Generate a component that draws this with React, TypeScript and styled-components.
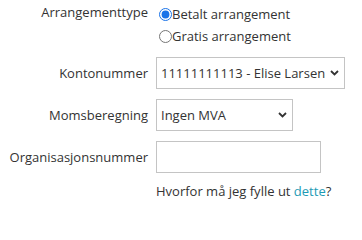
import React from 'react'
import styled, { createGlobalStyle } from 'styled-components'

const GlobalStyle = createGlobalStyle`
  html, body {
    margin: 0;
    padding: 0;
    background: #fff;
    font-family: 'Open Sans', 'Liberation Sans', sans-serif;
    font-size: 13px;
    color: #333;
  }
`

const Form = styled.div`
  display: grid;
  grid-template-columns: 148px 1fr;
  column-gap: 8px;
  row-gap: 10px;
  padding-top: 3px;
  align-items: center;
`

const Label = styled.label<{ $top?: boolean }>`
  text-align: right;
  align-self: ${(p) => (p.$top ? 'start' : 'center')};
  line-height: 18px;
  color: #333;
`

const RadioGroup = styled.div`
  display: flex;
  flex-direction: column;
`

const RadioRow = styled.label`
  display: flex;
  align-items: center;
  height: 22px;
  line-height: 22px;
`

const Radio = styled.input`
  margin: 0 0 0 3px;
  width: 13px;
  height: 13px;
  accent-color: #1a73e8;
`

const SelectWrap = styled.div<{ $width: number }>`
  position: relative;
  width: ${(p) => p.$width}px;
  height: 32px;
`

const Select = styled.select`
  appearance: none;
  width: 100%;
  height: 100%;
  box-sizing: border-box;
  border: 1px solid #c4c4c4;
  border-radius: 0;
  background: #fff;
  padding: 0 14px 0 4px;
  font-family: inherit;
  font-size: 13px;
  color: #333;
  outline: none;
`

const Chevron = styled.svg`
  position: absolute;
  right: 6px;
  top: 13px;
  pointer-events: none;
`

const TextInput = styled.input`
  width: 165px;
  height: 32px;
  box-sizing: border-box;
  border: 1px solid #c4c4c4;
  border-radius: 0;
  padding: 0 4px;
  font-family: inherit;
  font-size: 13px;
  outline: none;
`

const Help = styled.div`
  grid-column: 2;
  line-height: 18px;
  margin-top: -1px;
`

const Link = styled.a`
  color: #1d9bb5;
  text-decoration: none;
`

const Dropdown = ({ width, options }: { width: number; options: string[] }) => (
  <SelectWrap $width={width}>
    <Select defaultValue={options[0]}>
      {options.map((o) => (
        <option key={o}>{o}</option>
      ))}
    </Select>
    <Chevron width="9" height="6" viewBox="0 0 9 6">
      <path d="M1 1l3.5 3.5L8 1" fill="none" stroke="#333" strokeWidth="1.8" />
    </Chevron>
  </SelectWrap>
)

const App = () => {
  return (
    <>
      <GlobalStyle />
      <Form>
        <Label $top>Arrangementtype</Label>
        <RadioGroup>
          <RadioRow>
            <Radio type="radio" name="type" defaultChecked />
            Betalt arrangement
          </RadioRow>
          <RadioRow>
            <Radio type="radio" name="type" />
            Gratis arrangement
          </RadioRow>
        </RadioGroup>

        <Label>Kontonummer</Label>
        <Dropdown width={189} options={['11111111113 - Elise Larsen']} />

        <Label>Momsberegning</Label>
        <Dropdown width={137} options={['Ingen MVA', '25% MVA']} />

        <Label>Organisasjonsnummer</Label>
        <TextInput type="text" />

        <Help>
          Hvorfor må jeg fylle ut <Link href="#">dette</Link>?
        </Help>
      </Form>
    </>
  )
}

export default App
